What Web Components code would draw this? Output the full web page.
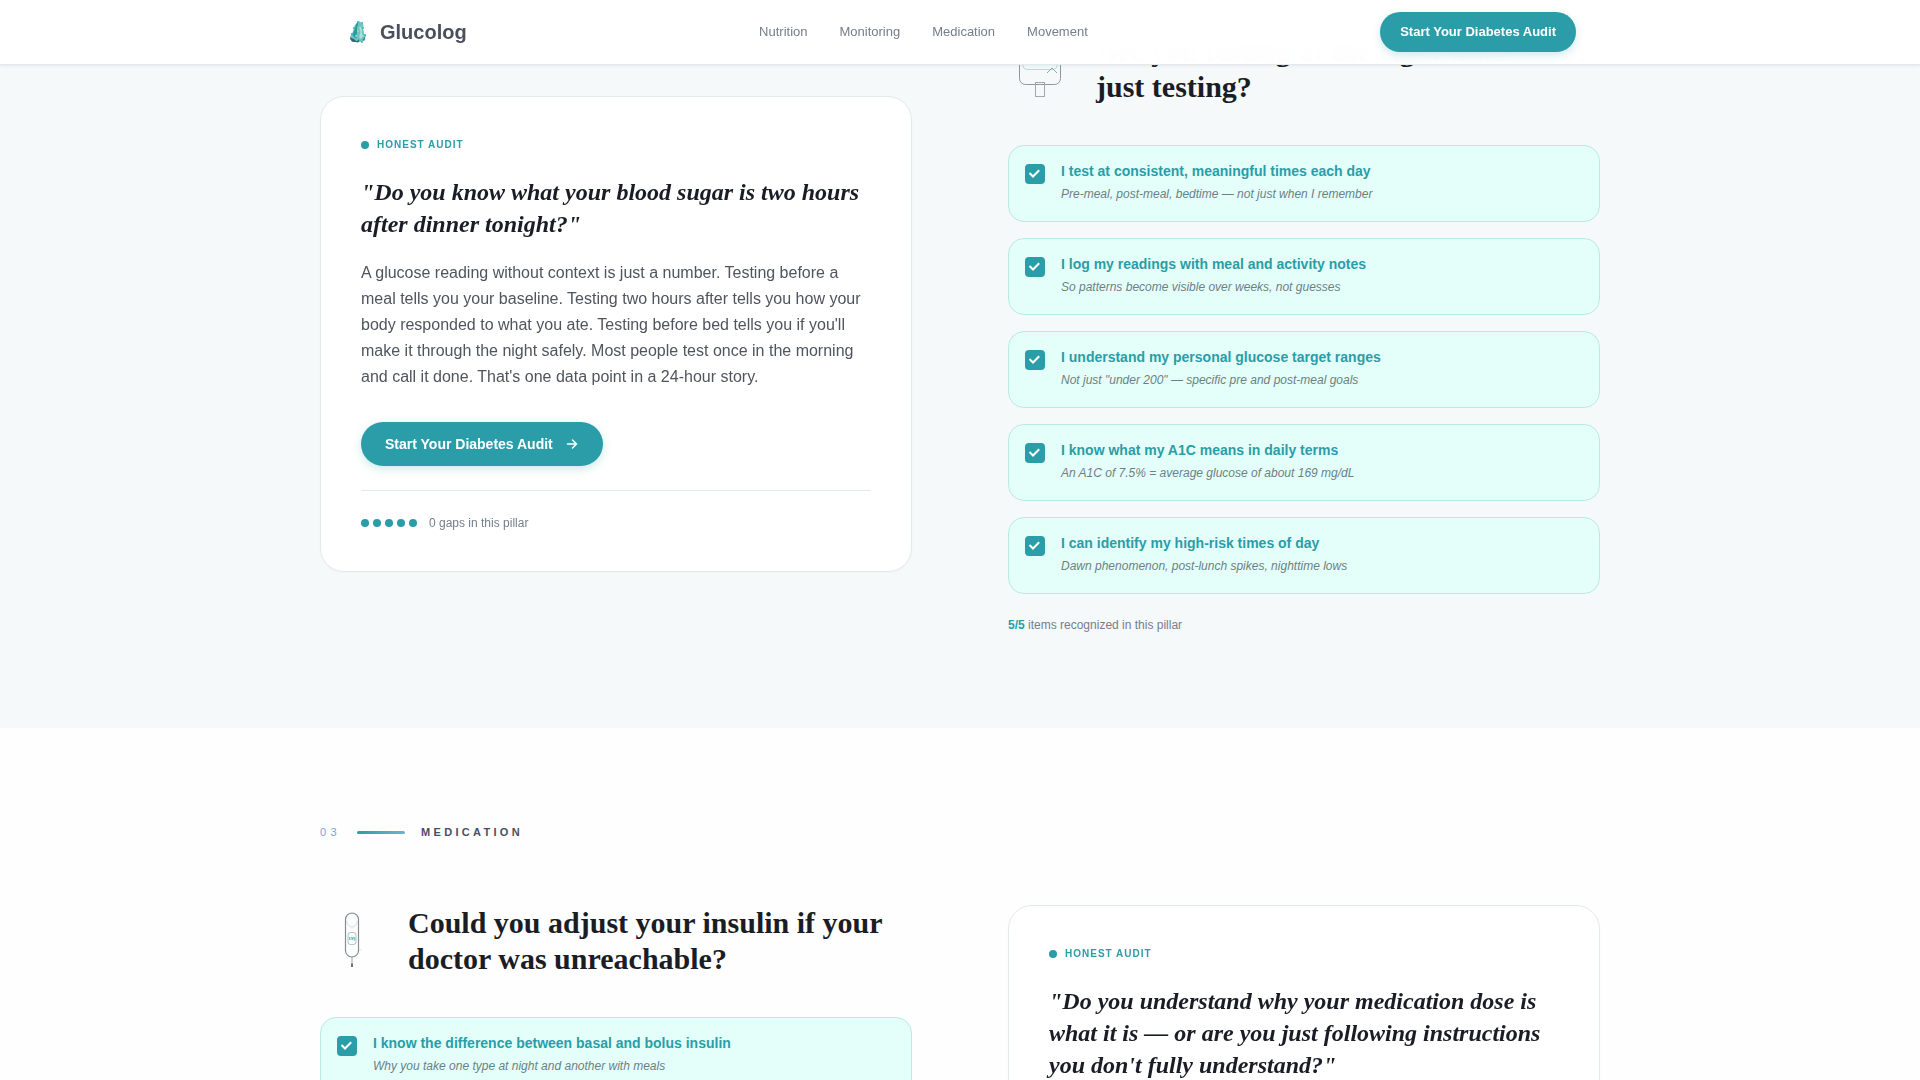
<!DOCTYPE html>
<html lang="en">
<head>
<meta charset="utf-8">
<meta name="viewport" content="width=device-width, initial-scale=1">
<title>Glucolog</title>
<style>
  :root {
    --teal: #2a9da8;
    --ink: #1a1d25;
    --body: #50545e;
    --muted: #757e8c;
    --line: #e4e9ec;
    --mint: #e4fff9;
    --mint-line: #b9ecdf;
    --tint: #f5f9fa;
    --sans: "Liberation Sans", Arial, sans-serif;
    --serif: "Liberation Serif", "Times New Roman", serif;
  }
  body {
    margin: 0;
    height: 100vh;
    overflow: hidden;
    background: #fefefe;
    color: var(--ink);
    font-family: var(--sans);
  }
</style>
</head>
<body>
<glu-header></glu-header>
<main>
  <glu-section tinted>
    <glu-audit slot="start" gaps="0" action>
      <span slot="quote">"Do you know what your blood sugar is two hours after dinner tonight?"</span>
      <span slot="text">A glucose reading without context is just a number. Testing before a meal tells you your baseline. Testing two hours after tells you how your body responded to what you ate. Testing before bed tells you if you'll make it through the night safely. Most people test once in the morning and call it done. That's one data point in a 24-hour story.</span>
    </glu-audit>
    <glu-pillar slot="end" score="5/5">
      <svg slot="icon" width="64" height="64" viewBox="0 0 64 64" fill="none" aria-hidden="true">
        <rect x="11.500" y="4.500" width="41" height="43" rx="6" stroke="#8f979d"/>
        <path d="M15 9h34v19a4 4 0 0 1-4 4.500H19a4 4 0 0 1-4-4.500z" stroke="#b7dadd"/>
        <path d="M39 36l5-5 5 5" stroke="#92a5a8"/>
        <rect x="27.500" y="45.500" width="9" height="14" stroke="#a0a7ad"/>
      </svg>
      <span slot="title">Are you testing at the right times — or just testing?</span>
      <glu-check>I test at consistent, meaningful times each day<span slot="note">Pre-meal, post-meal, bedtime — not just when I remember</span></glu-check>
      <glu-check>I log my readings with meal and activity notes<span slot="note">So patterns become visible over weeks, not guesses</span></glu-check>
      <glu-check>I understand my personal glucose target ranges<span slot="note">Not just "under 200" — specific pre and post-meal goals</span></glu-check>
      <glu-check>I know what my A1C means in daily terms<span slot="note">An A1C of 7.5% = average glucose of about 169 mg/dL</span></glu-check>
      <glu-check>I can identify my high-risk times of day<span slot="note">Dawn phenomenon, post-lunch spikes, nighttime lows</span></glu-check>
    </glu-pillar>
  </glu-section>
  <glu-section number="03" label="MEDICATION">
    <glu-pillar slot="start">
      <svg slot="icon" width="64" height="64" viewBox="0 0 64 64" fill="none" aria-hidden="true">
        <rect x="25.500" y="4" width="13" height="44" rx="6.500" stroke="#868c92" stroke-width="1.200"/>
        <path d="M27 12c0 8 10 8 10 0" stroke="#c9dfe2"/>
        <rect x="28" y="23.500" width="8" height="12" rx="2.500" stroke="#9db1b6" stroke-width=".8"/>
        <path d="M29.500 28v3M31 31v-2.500h1.500V31M35 28.500h-1.500v1.200H35V31h-1.500" stroke="#4fb9b8" stroke-width=".8"/>
        <path d="M32 48v7" stroke="#9aa0a5"/>
        <path d="M32 54.500V58" stroke="#6c7176" stroke-width="2"/>
        <path d="M39 31h1M39 41h3" stroke="#dbe5e8"/>
      </svg>
      <span slot="title">Could you adjust your insulin if your doctor was unreachable?</span>
      <glu-check>I know the difference between basal and bolus insulin<span slot="note">Why you take one type at night and another with meals</span></glu-check>
    </glu-pillar>
    <glu-audit slot="end">
      <span slot="quote">"Do you understand why your medication dose is what it is — or are you just following instructions you don't fully understand?"</span>
    </glu-audit>
  </glu-section>
</main>

<template id="t-header">
  <style>
    :host {
      display: block; position: fixed; inset: 0 0 auto 0; z-index: 10;
      background: rgba(255, 255, 255, .985);
      backdrop-filter: blur(12px);
      border-bottom: 1px solid var(--line);
      box-shadow: 0 1px 3px rgba(30, 50, 70, .08);
    }
    .bar {
      box-sizing: border-box; max-width: 1280px; height: 64px; margin: 0 auto; padding: 0 24px;
      display: flex; align-items: center; justify-content: space-between;
    }
    a { text-decoration: none; color: var(--muted); }
    .brand { display: flex; align-items: center; gap: 8px; font: bold 20px/28px var(--sans); color: #4a4f5e; }
    nav { display: flex; gap: 32px; font-size: 13px; line-height: 20px; }
  </style>
  <div class="bar">
    <a class="brand" href="#top">
      <svg width="28" height="28" viewBox="0 0 28 28" aria-hidden="true">
        <path d="M13 5c1-2 4-2 4 0l2 1c1 2 0 3 0 5 1 2 1 3 1 5 3 1 2 3 1 4 1 2 0 3-2 3-2 2-4 0-6 1-3 0-6 0-6-2-2-1-1-3 0-5 0-2 2-2 2-4 1-3 1-6 4-8z" fill="#6cc7c1"/>
        <path d="M14 4c-3 2-2 6-4 9-1 3-2 4 0 6l3 2c-2-4 1-6 0-9s2-5 1-8z" fill="#2a9b9b"/>
        <path d="M16 8c-2 3 2 5 0 8-1 2-1 4 1 5 2-2 1-4 1-6s0-5-2-7z" fill="#a9e2da"/>
        <path d="M7 19c0 2 3 1 4 3s3 1 4-1c1 3-1 4-3 3-3 0-4 0-5-2-1-1-1-2 0-3z" fill="#3e6076"/>
        <path d="M18 22c2 0 1-3 3-3 0 3-1 4-3 3z" fill="#417f8b"/>
        <g fill="#45b5ad"><circle cx="14" cy="4" r="1"/><circle cx="18" cy="5" r="1"/><circle cx="10" cy="10" r="1"/><circle cx="19" cy="10" r="1"/><circle cx="8" cy="16" r="1"/><circle cx="21" cy="17" r="1"/><circle cx="18" cy="24" r="1"/></g>
        <g fill="#d3f3ee"><circle cx="14" cy="13" r=".7"/><circle cx="12" cy="18" r=".8"/><circle cx="19" cy="18" r=".7"/></g>
      </svg>
      <span>Glucolog</span>
    </a>
    <nav>
      <a href="#nutrition">Nutrition</a>
      <a href="#monitoring">Monitoring</a>
      <a href="#medication">Medication</a>
      <a href="#movement">Movement</a>
    </nav>
    <glu-cta small>Start Your Diabetes Audit</glu-cta>
  </div>
</template>

<template id="t-cta">
  <style>
    :host { display: inline-block; }
    button {
      display: flex; align-items: center; gap: 10px;
      height: 44px; padding: 0 24px; border: 0; border-radius: 22px;
      background: var(--teal); color: #fff; cursor: pointer;
      font: bold 14px/20px var(--sans);
      box-shadow: 0 3px 8px rgba(42, 157, 168, .22);
    }
    :host([small]) button { height: 40px; padding: 0 20px; font-size: 13px; }
    :host([small]) svg { display: none; }
  </style>
  <button type="button"><slot></slot>
    <svg width="16" height="16" viewBox="0 0 16 16" fill="none" stroke="#fff" stroke-width="1.500" stroke-linecap="round" stroke-linejoin="round" aria-hidden="true"><path d="M4.500 8h9M9.500 4l4 4-4 4"/></svg>
  </button>
</template>

<template id="t-section">
  <style>
    :host { display: block; padding: 96px 24px; }
    :host([tinted]) { background: var(--tint); padding: 33px 24px 94px; }
    .wrap { max-width: 1280px; margin: 0 auto; }
    .eyebrow {
      display: flex; align-items: center; gap: 16px; margin-bottom: 64px;
      font-size: 11px; line-height: 17px;
    }
    .eyebrow[hidden] { display: none; }
    .num { color: #6fa8d6; letter-spacing: .4em; }
    .rule { width: 48px; height: 3px; border-radius: 2px; background: linear-gradient(90deg, #2a9da8, #6fb3d0); }
    .name { font-weight: bold; letter-spacing: .3em; color: #4a4f5e; }
    .cols { display: grid; grid-template-columns: 1fr 1fr; gap: 96px; }
  </style>
  <div class="wrap">
    <div class="eyebrow"><span class="num"></span><span class="rule"></span><span class="name"></span></div>
    <div class="cols"><slot name="start"></slot><slot name="end"></slot></div>
  </div>
</template>

<template id="t-audit">
  <style>
    :host {
      display: block; align-self: start; position: sticky; top: 96px;
      padding: 40px; border: 1px solid var(--line); border-radius: 24px;
      background: #fefffe; box-shadow: 0 1px 2px rgba(30, 50, 70, .03);
    }
    .tag {
      display: flex; align-items: center; gap: 8px;
      font-size: 10px; line-height: 15px; font-weight: bold; letter-spacing: .1em; color: var(--teal);
    }
    i { width: 8px; height: 8px; border-radius: 50%; background: var(--teal); }
    blockquote { margin: 24px 0 0; font: italic bold 24px/32px var(--serif); }
    p { margin: 20px 0 32px; font-size: 16px; line-height: 26px; color: var(--body); }
    .foot {
      display: flex; align-items: center; gap: 12px;
      margin-top: 24px; padding-top: 24px; border-top: 1px solid var(--line);
      font-size: 12px; line-height: 16px; color: var(--muted);
    }
    .dots { display: flex; gap: 4px; }
  </style>
  <div class="tag"><i></i><span>HONEST AUDIT</span></div>
  <blockquote><slot name="quote"></slot></blockquote>
  <div class="more">
    <p><slot name="text"></slot></p>
    <glu-cta>Start Your Diabetes Audit</glu-cta>
    <div class="foot"><span class="dots"><i></i><i></i><i></i><i></i><i></i></span><span class="gaps"></span></div>
  </div>
</template>

<template id="t-pillar">
  <style>
    :host { display: block; }
    header { display: flex; align-items: center; gap: 24px; margin-bottom: 40px; }
    h2 { flex: 1; margin: 0; font: bold 30px/36px var(--serif); }
    .list { display: grid; gap: 16px; }
    .score { margin: 22px 0 0; font-size: 12px; line-height: 18px; color: var(--muted); }
    b { color: var(--teal); }
  </style>
  <header><slot name="icon"></slot><h2><slot name="title"></slot></h2></header>
  <div class="list"><slot></slot></div>
  <p class="score"><b></b> items recognized in this pillar</p>
</template>

<template id="t-check">
  <style>
    :host { display: block; }
    label {
      display: flex; align-items: flex-start; gap: 16px;
      padding: 16px 16px 17px; border: 1px solid var(--mint-line); border-radius: 16px;
      background: var(--mint); cursor: pointer;
    }
    .box { display: grid; place-items: center; margin-top: 2px; }
    .box > * { grid-area: 1 / 1; }
    input {
      appearance: none; width: 20px; height: 20px; margin: 0;
      border: 2px solid var(--teal); border-radius: 4px;
    }
    input:checked { background: var(--teal); }
    input:not(:checked) + svg { visibility: hidden; }
    svg { pointer-events: none; }
    .text { display: grid; gap: 4px; }
    .title { font-weight: bold; font-size: 14px; line-height: 18px; color: var(--teal); }
    .note { font-style: italic; font-size: 12px; line-height: 20px; color: #6b7f86; }
  </style>
  <label>
    <span class="box"><input type="checkbox" checked>
      <svg width="14" height="14" viewBox="0 0 14 14" fill="none" stroke="#fff" stroke-width="2" aria-hidden="true"><path d="M1.500 6l3.500 3.500L11.200 3.200"/></svg>
    </span>
    <span class="text"><span class="title"><slot></slot></span><span class="note"><slot name="note"></slot></span></span>
  </label>
</template>

<script>
  class GluElement extends HTMLElement {
    constructor() {
      super();
      const id = 't-' + this.localName.replace('glu-', '');
      this.attachShadow({ mode: 'open' }).append(document.getElementById(id).content.cloneNode(true));
    }
    part$(sel) { return this.shadowRoot.querySelector(sel); }
  }
  class GluCta extends GluElement {}
  class GluHeader extends GluElement {}
  class GluCheck extends GluElement {}
  class GluSection extends GluElement {
    connectedCallback() {
      this.part$('.eyebrow').hidden = !this.hasAttribute('label');
      this.part$('.num').textContent = this.getAttribute('number') || '';
      this.part$('.name').textContent = this.getAttribute('label') || '';
    }
  }
  class GluAudit extends GluElement {
    connectedCallback() {
      if (this.hasAttribute('action')) this.part$('.gaps').textContent = this.getAttribute('gaps') + ' gaps in this pillar';
      else this.part$('.more').remove();
    }
  }
  class GluPillar extends GluElement {
    connectedCallback() {
      if (this.hasAttribute('score')) this.part$('b').textContent = this.getAttribute('score');
      else this.part$('.score').remove();
    }
  }
  customElements.define('glu-cta', GluCta);
  customElements.define('glu-header', GluHeader);
  customElements.define('glu-check', GluCheck);
  customElements.define('glu-section', GluSection);
  customElements.define('glu-audit', GluAudit);
  customElements.define('glu-pillar', GluPillar);
</script>
</body>
</html>
